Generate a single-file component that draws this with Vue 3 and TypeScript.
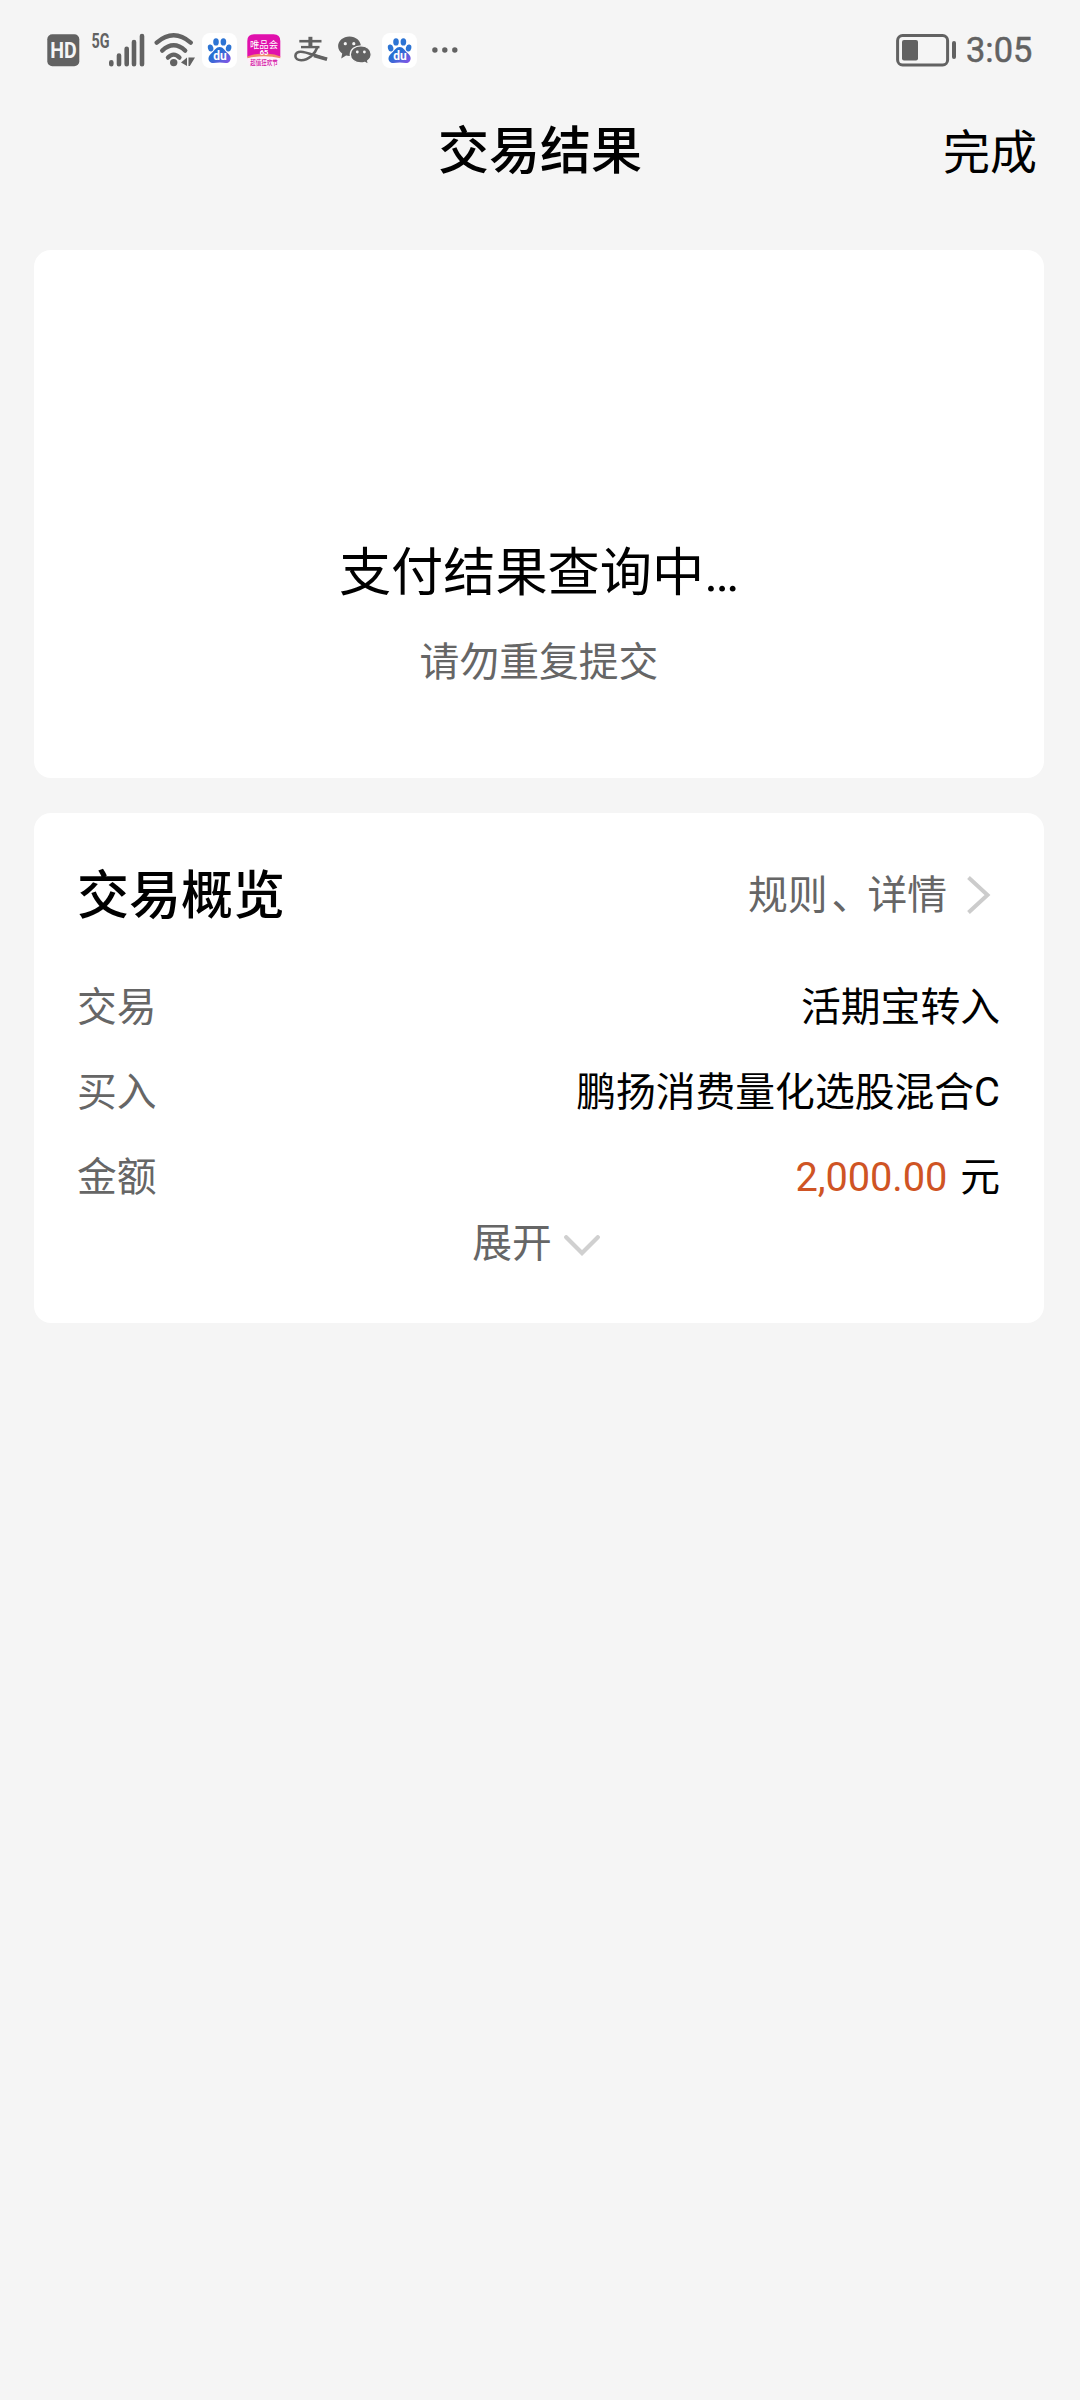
<script setup lang="ts">
interface Row {
  label: string
  value: string
  amount?: string
}

const rows: Row[] = [
  { label: '交易', value: '活期宝转入' },
  { label: '买入', value: '鹏扬消费量化选股混合C' },
  { label: '金额', value: '元', amount: '2,000.00' },
]

type Notice = 'baidu' | 'vip' | 'alipay' | 'wechat'
const notices: Notice[] = ['baidu', 'vip', 'alipay', 'wechat', 'baidu']
</script>

<template>
  <div class="screen">
    <header class="status">
      <svg class="hd" width="33" height="33" viewBox="0 0 33 33">
        <rect x="0.3" y="0.3" width="32" height="32" rx="5" fill="#626262" />
        <text x="16.5" y="24" text-anchor="middle" textLength="26.5" lengthAdjust="spacingAndGlyphs" font-size="22" font-weight="700" fill="#f5f5f5">HD</text>
      </svg>
      <svg class="signal" width="54" height="50" viewBox="0 -8 54 50">
        <text x="0.5" y="15.3" textLength="18" lengthAdjust="spacingAndGlyphs" font-size="20" font-weight="700" fill="#626262">5G</text>
        <g stroke="#626262" stroke-width="4.6" stroke-linecap="round">
          <path d="M20.3 29.2V31.2M28 22.6V31.2M35.7 15.8V31.2M43 9V31.2M51 3V31.2" />
        </g>
      </svg>
      <svg class="wifi" width="42" height="38" viewBox="0 -2 42 38">
        <g fill="none" stroke="#626262" stroke-width="4.4" stroke-linecap="round">
          <path d="M2.7 9.6Q19.7-5 36.7 9.6" />
          <path d="M8.2 17.6Q19.7 7 31.2 17.6" />
          <path d="M14 24.6Q19.7 18.6 25.4 24.6" />
        </g>
        <circle cx="19.7" cy="29.6" r="3.7" fill="#626262" />
        <path d="M33 24.5V33L27 29.4ZM34.5 24.5H41L35.8 33H34.5Z" fill="#626262" />
      </svg>
      <div class="notices">
        <template v-for="(n, i) in notices" :key="i">
          <svg v-if="n === 'baidu'" class="baidu" width="35" height="35" viewBox="0 0 35 35">
            <defs>
              <linearGradient :id="'paw' + i" x1="0" y1="0" x2="1" y2="1">
                <stop offset="0.4" stop-color="#286fd2" />
                <stop offset="1" stop-color="#8a52e8" />
              </linearGradient>
            </defs>
            <rect width="35" height="35" rx="8" fill="#fff" />
            <g fill="#2c74d4">
              <ellipse cx="14" cy="8.9" rx="2.8" ry="3.7" />
              <ellipse cx="21.4" cy="8.9" rx="2.8" ry="3.7" />
              <ellipse cx="8.6" cy="15" rx="2.7" ry="3.5" transform="rotate(-15 8.6 15)" />
              <ellipse cx="26.6" cy="15" rx="2.7" ry="3.5" transform="rotate(15 26.6 15)" />
            </g>
            <path :fill="`url(#paw${i})`" d="M17.7 14C21.5 14 22.2 17.3 25.2 19.8C28.3 22.3 29.7 25.3 27.8 28.2C25.8 31.2 21.5 29.5 17.7 29.5S9.4 31.2 7.3 28.2C5.5 25.3 7 22.3 10 19.8C13 17.3 13.8 14 17.7 14Z" />
            <text x="17.9" y="27" text-anchor="middle" font-size="12" font-weight="700" fill="#fff">du</text>
          </svg>
          <svg v-else-if="n === 'vip'" class="vip" width="34" height="33" viewBox="0 0 34 33">
            <rect x="0.3" y="0.3" width="33" height="32" rx="7" fill="#fdf0fa" />
            <path d="M7 0.3H26.6Q33.3 0.3 33.3 7V23L17 20L0.3 23V7Q0.3 0.3 7 0.3Z" fill="#e010ac" />
            <path d="M0.3 22.5Q10 18.8 17 20Q26 18.8 33.3 22.5V24.2Q17 20.5 0.3 24.2Z" fill="#f08a6a" />
            <text x="17" y="13.7" text-anchor="middle" font-size="9.4" fill="#fff">唯品会</text>
            <text x="17" y="21.3" text-anchor="middle" font-size="7.5" font-weight="700" fill="#fff">65</text>
            <text x="17" y="30.6" text-anchor="middle" textLength="27.5" lengthAdjust="spacingAndGlyphs" font-size="7.4" font-weight="500" fill="#d312a5">超值狂欢节</text>
          </svg>
          <svg v-else-if="n === 'alipay'" class="alipay" width="34" height="28" viewBox="0 0 34 28">
            <g fill="none" stroke="#626262">
              <path d="M5.3 5.2H27.5" stroke-width="2.6" />
              <path d="M16.4 0.8V11" stroke-width="4" />
              <path d="M7 11.1H25.5" stroke-width="2.4" />
              <path d="M23.5 11C21 18 14.5 24.2 7.2 24.2C3.6 24.2 1.4 22.4 1.4 19.9C1.4 17.3 3.7 15.7 6.7 15.7C13.5 15.7 22.5 20.8 33 23.1" stroke-width="2.6" />
              <path d="M20 19.4L33 23.2" stroke-width="3.6" />
            </g>
          </svg>
          <svg v-else class="wechat" width="34" height="29" viewBox="0 0 34 29">
            <path d="M11.5 0.4C5.2 0.4 0.1 4.7 0.1 10.1C0.1 13.1 1.7 15.8 4.2 17.6L3.2 22.6L8.1 19.5C9.2 19.8 10.3 19.9 11.5 19.9C17.8 19.9 22.9 15.5 22.9 10.1S17.8 0.4 11.5 0.4Z" fill="#626262" />
            <path d="M22.9 9.8C29 9.8 33.2 13.6 33.2 18.3C33.2 21 31.9 23.3 29.7 24.9L30.4 28.5L26.9 26.4C25.6 26.8 24.3 27 22.9 27C16.8 27 12.3 23.2 12.3 18.4S16.8 9.8 22.9 9.8Z" fill="#626262" stroke="#f5f5f5" stroke-width="1.3" />
            <g fill="#f5f5f5">
              <circle cx="7.3" cy="7.7" r="1.6" />
              <circle cx="15.8" cy="7.7" r="1.6" />
              <circle cx="19.3" cy="16" r="1.4" />
              <circle cx="26.4" cy="16" r="1.4" />
            </g>
          </svg>
        </template>
      </div>
      <svg class="more" width="26" height="6" viewBox="0 0 26 6" fill="#626262">
        <circle cx="2.9" cy="3" r="2.7" />
        <circle cx="12.8" cy="3" r="2.7" />
        <circle cx="22.8" cy="3" r="2.7" />
      </svg>
      <svg class="battery" width="61" height="33" viewBox="0 0 61 33">
        <rect x="1.6" y="1.6" width="50" height="29.4" rx="5" fill="none" stroke="#626262" stroke-width="3" />
        <rect x="6" y="6" width="16" height="20.5" rx="2" fill="#626262" />
        <path d="M58 9V23" stroke="#626262" stroke-width="4" stroke-linecap="round" />
      </svg>
      <span class="clock">3:05</span>
    </header>

    <nav class="nav">
      <h1>交易结果</h1>
      <span class="done">完成</span>
    </nav>

    <main>
      <section class="card result">
        <p class="state">支付结果查询中…</p>
        <p class="hint">请勿重复提交</p>
      </section>

      <section class="card overview">
        <div class="head">
          <h2>交易概览</h2>
          <div class="link">
            <span>规则<i class="mark">、</i>详情</span>
            <svg width="26" height="40" viewBox="0 0 26 40">
              <path d="M2.5 2.5L21.5 20L2.5 37.5" fill="none" stroke="#ccc" stroke-width="4" />
            </svg>
          </div>
        </div>
        <div v-for="row in rows" :key="row.label" class="row">
          <span class="label">{{ row.label }}</span>
          <span class="value"><em v-if="row.amount">{{ row.amount }}</em>{{ row.value }}</span>
        </div>
        <div class="expand">
          <span>展开</span>
          <svg width="36" height="22" viewBox="0 0 36 22">
            <path d="M2.2 2.2L18 18L33.8 2.2" fill="none" stroke="#d0d0d0" stroke-width="4.2" stroke-linecap="round" />
          </svg>
        </div>
      </section>
    </main>
  </div>
</template>

<style>
body {
  background: #f5f5f5;
}
</style>

<style scoped>
.screen {
  box-sizing: border-box;
  width: 1080px;
  height: 2400px;
  overflow: hidden;
  background: #f5f5f5;
  color: #000;
  font-family: Roboto, "Noto Sans CJK SC", sans-serif;
}
h1, h2, p {
  margin: 0;
}
svg {
  display: block;
  flex: none;
}
.status {
  display: flex;
  align-items: center;
  height: 100px;
  padding: 0 48px 0 47px;
}
.signal {
  margin-left: 10.5px;
}
.wifi {
  margin-left: 9px;
}
.notices {
  display: flex;
  align-items: center;
  margin-left: 6px;
}
.vip {
  margin-left: 10.5px;
}
.alipay {
  margin-left: 12.5px;
}
.wechat {
  margin-left: 10px;
}
.wechat + .baidu {
  margin-left: 10px;
}
.more {
  margin-left: 15px;
}
.battery {
  margin-left: auto;
}
.clock {
  margin-left: 9px;
  width: 66px;
  font-size: 34.4px;
  line-height: 40px;
  -webkit-text-stroke: 0.5px #626262;
  color: #626262;
  white-space: nowrap;
}
.nav {
  display: grid;
  grid-template-columns: 1fr auto 1fr;
  align-items: center;
  height: 100px;
  padding: 4px 43px 0;
  box-sizing: border-box;
}
.nav h1 {
  grid-column: 2;
  font-size: 51px;
  line-height: 60px;
  font-weight: 500;
}
.done {
  justify-self: end;
  padding-top: 2px;
  font-size: 47px;
  line-height: 60px;
}
main {
  display: flex;
  flex-direction: column;
  gap: 35px;
  padding: 50px 36px 0 34px;
}
.card {
  box-sizing: border-box;
  border-radius: 17px;
  background: #fff;
}
.result {
  height: 528px;
  padding-top: 284px;
  text-align: center;
}
.state {
  font-size: 52.2px;
  line-height: 80px;
}
.hint {
  margin-top: 19px;
  font-size: 39.8px;
  line-height: 60px;
  color: #666;
}
.overview {
  height: 510px;
  padding: 42px 44px 0 43px;
}
.head {
  display: flex;
  align-items: center;
  justify-content: space-between;
  height: 80px;
  margin-bottom: 30px;
}
.head h2 {
  padding-top: 4px;
  font-size: 52px;
  line-height: 76px;
  font-weight: 500;
}
.link {
  display: flex;
  align-items: center;
  gap: 19px;
  margin-right: 8px;
  font-size: 39.8px;
  line-height: 60px;
  color: #666;
}
.link span {
  padding-top: 1px;
}
.mark {
  margin: 0 -4px 0 4px;
  font-style: normal;
}
.row {
  display: flex;
  align-items: center;
  justify-content: space-between;
  height: 85px;
  font-size: 39.8px;
  line-height: 60px;
}
.label {
  color: #666;
}
.value em {
  margin-right: 13px;
  font-style: normal;
  letter-spacing: -0.1px;
  color: #cf5424;
}
.expand {
  display: flex;
  align-items: center;
  justify-content: center;
  gap: 12px;
  margin: -6px 5px 0 0;
  font-size: 39.8px;
  line-height: 60px;
  color: #666;
}
.expand svg {
  margin-top: 3px;
}
</style>
